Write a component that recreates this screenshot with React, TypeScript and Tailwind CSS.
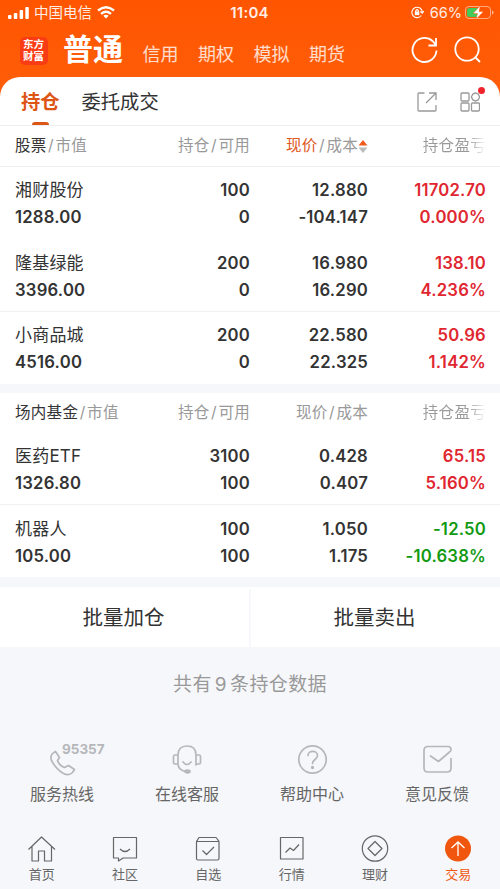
import React from "react";

type Row = {
  name: string;
  value: string;
  held: string;
  usable: string;
  price: string;
  cost: string;
  profit: string;
  rate: string;
  down?: boolean;
};

const stocks: Row[] = [
  { name: "湘财股份", value: "1288.00", held: "100", usable: "0", price: "12.880", cost: "-104.147", profit: "11702.70", rate: "0.000%" },
  { name: "隆基绿能", value: "3396.00", held: "200", usable: "0", price: "16.980", cost: "16.290", profit: "138.10", rate: "4.236%" },
  { name: "小商品城", value: "4516.00", held: "200", usable: "0", price: "22.580", cost: "22.325", profit: "50.96", rate: "1.142%" },
];

const funds: Row[] = [
  { name: "医药ETF", value: "1326.80", held: "3100", usable: "100", price: "0.428", cost: "0.407", profit: "65.15", rate: "5.160%" },
  { name: "机器人", value: "105.00", held: "100", usable: "100", price: "1.050", cost: "1.175", profit: "-12.50", rate: "-10.638%", down: true },
];

const columns = "grid grid-cols-[130px_105px_118px_118px] pl-[15px]";

function HoldingRow({ row, divider }: { row: Row; divider: boolean }) {
  return (
    <div
      className={`${columns} h-[72.400px] items-center border-b pt-[3px] text-[16.700px] leading-[27px] font-semibold tracking-[0.2px] text-[#333] ${
        divider ? "border-[#f0f1f3]" : "border-transparent"
      }`}
    >
      <div>
        <div className="text-[17px] font-normal">{row.name}</div>
        <div>{row.value}</div>
      </div>
      <div className="text-right">
        <div>{row.held}</div>
        <div>{row.usable}</div>
      </div>
      <div className="text-right">
        <div>{row.price}</div>
        <div>{row.cost}</div>
      </div>
      <div className={`text-right ${row.down ? "text-[#129a12]" : "text-[#e0262f]"}`}>
        <div>{row.profit}</div>
        <div>{row.rate}</div>
      </div>
    </div>
  );
}

function TableHead({ title, sorted }: { title: string; sorted?: boolean }) {
  return (
    <div className={`${columns} h-10 items-center text-[15.500px] tracking-[0.3px] whitespace-nowrap text-[#999]`}>
      <div>
        <span className="text-[#333]">{title}</span>
        <span className="px-[1.500px]">/</span>市值
      </div>
      <div className="text-right">
        持仓<span className="px-[1.500px]">/</span>可用
      </div>
      <div className="flex items-center justify-end">
        <span className={sorted ? "text-[#e0591c]" : ""}>现价</span>
        <span className="px-[1.500px]">/</span>成本
        {sorted && (
          <svg className="h-[13px] w-[10px]" viewBox="0 0 10 13">
            <path d="M5 0l4.500 5.500h-9z" fill="#f05a1c" />
            <path d="M5 13L.5 7.500h9z" fill="#bbb" />
          </svg>
        )}
      </div>
      <div className="justify-self-end bg-gradient-to-r from-[#999] from-72% to-white to-100% bg-clip-text text-transparent">
        持仓盈亏
      </div>
    </div>
  );
}

const services = [
  {
    label: "服务热线",
    icon: <path d="M8 8.500c-3 1-3.500 5-2.500 8 3 6 7 10 12 13 4 2 7 1 9-1l2-3-6-4-4 2c-3-1-6-4-7-7l2-3-4-6z" />,
  },
  {
    label: "在线客服",
    icon: (
      <>
        <path d="M7 11C7 5 10 2 16 2s9 3 9 9v10M7 11v10c1 4 4 6 8 6.500M7 11H4q-1.500 0-1.500 1.500v6Q2.500 20 4 20h3M25 11h3q1.500 0 1.500 1.500v6q0 1.500-1.500 1.500h-3M12 18q4 5 8 0" />
        <ellipse cx="16.500" cy="27.500" rx="2.500" ry="1.300" fill="currentColor" />
      </>
    ),
  },
  {
    label: "帮助中心",
    icon: (
      <>
        <circle cx="16.500" cy="15.500" r="13.700" />
        <path d="M12 11.500c0-5.500 9.500-5.500 9.500 0 0 4-5 4-5 8" />
        <circle cx="16.500" cy="23.500" r=".8" fill="currentColor" />
      </>
    ),
  },
  {
    label: "意见反馈",
    icon: <path d="M30 14.500V24q0 4-4 4H7q-4 0-4-4V6.500q0-4 4-4h20q3 0 3 3 0 1.500-1.500 2.500L17.500 17.500l-8-5.500" />,
  },
];

const tabs = [
  { label: "首页", icon: <path d="M.5 14.500L13.500 2l13.500 12.500M4 11.500V26h6.500V16h6v10H23.500V11.500" /> },
  { label: "社区", icon: <path d="M2.500 2.500h23v20.500H12l-4.500 3v-3h-5zM9 14q5 5 10 0" /> },
  { label: "自选", icon: <path d="M2.500 7q0-1 1-2l1.500-2.500h17L24 5q1 1 1 2v16.500q0 1.500-1.500 1.500H4q-1.500 0-1.500-1.500zM2.500 6.500H25M8.500 15.500l4 4 7.500-7.500" /> },
  { label: "行情", icon: <path d="M2.500 2.500h22.500v21.500H2.500zM7.500 17.500l4.500-4.500 3.500 2.500 5.500-6" /> },
  {
    label: "理财",
    icon: (
      <>
        <circle cx="14" cy="13.500" r="12.700" />
        <path d="M14 6.500l7 7-7 7-7-7z" />
      </>
    ),
  },
];

export default function App() {
  return (
    <div className="h-[889px] w-[500px] overflow-hidden bg-[#f6f7fa] font-['Inter','Noto_Sans_CJK_SC',sans-serif]">
      <div className="bg-gradient-to-b from-[#ff5500] to-[#ff600d]">
        <div className="grid h-[25px] grid-cols-3 items-center pr-[6px] pl-2 text-[14px] text-white/90">
          <div className="flex items-center gap-[5px] whitespace-nowrap">
            <svg className="h-[12px] w-[21px]" viewBox="0 0 21 12" fill="white">
              <rect x="0" y="8" width="3.500" height="4" rx="1" />
              <rect x="5.800" y="6" width="3.500" height="6" rx="1" />
              <rect x="11.600" y="3" width="3.500" height="9" rx="1" />
              <rect x="17.300" y="0" width="3.500" height="12" rx="1" />
            </svg>
            <span className="text-[14.500px]">中国电信</span>
            <svg className="h-[13px] w-[18px]" viewBox="0 0 18 13" fill="none" stroke="white" strokeWidth="2.300">
              <path d="M1 4.500q8-6.500 16 0M4 7.800q5-4 10 0" />
              <path d="M9 12.500L6.300 9.700q2.700-2 5.400 0z" fill="white" stroke="none" />
            </svg>
          </div>
          <div className="pt-[1px] pr-[3px] text-center text-[15px] font-semibold tracking-[0.2px]">11:04</div>
          <div className="flex items-center justify-end">
            <svg className="mr-[6px] h-[13px] w-[13px]" viewBox="0 0 13 13" fill="none" stroke="white" strokeWidth="1.100">
              <path d="M10.300 9.500A5.200 5.200 0 1 1 11.300 6M9.300 5.500l2 1.700 1.500-2.200" />
              <rect x="3.800" y="5.500" width="4.500" height="3.600" fill="white" stroke="none" />
              <path d="M4.800 6V4.500q1.200-1.700 2.500 0V6" />
            </svg>
            <span className="mr-[3px] pt-[1px] text-[14.500px]">66%</span>
            <svg className="h-[15px] w-[29px]" viewBox="0 0 29 15">
              <rect x=".5" y="1.500" width="25" height="12" rx="3.500" fill="none" stroke="white" strokeOpacity=".5" />
              <path d="M4.500 3H13v9H4.500Q2 12 2 9.500v-4Q2 3 4.500 3z" fill="#42cb5b" />
              <path d="M27 5.500v4q1.500-.5 1.500-2t-1.500-2z" fill="white" fillOpacity=".6" />
              <path d="M15.500.5L8 8.500h4.500L11 14.500l7.500-8H14z" fill="white" stroke="#ff5a08" strokeWidth=".5" />
            </svg>
          </div>
        </div>
        <div className="flex h-[52px] items-center pr-[18px] pl-[20px]">
          <div className="flex h-[28px] w-[28px] items-center justify-center rounded-[5px] bg-[#fa3c14] text-[10.500px] leading-[12px] font-bold text-white">
            <div className="w-[22px] break-all">东方财富</div>
          </div>
          <div className="-mt-[4px] ml-[15px] text-[30px] leading-none font-bold text-white">普通</div>
          <div className="mt-[7px] ml-[19.500px] flex gap-[19.500px] text-[18px] text-white/80">
            <span>信用</span>
            <span>期权</span>
            <span>模拟</span>
            <span>期货</span>
          </div>
          <div className="-mt-[3px] ml-auto flex gap-[15px]">
            <svg className="h-[28px] w-[28px]" viewBox="0 0 28 28" fill="none" stroke="white" strokeWidth="1.800">
              <path d="M25.500 14.500A12 12 0 1 1 21.500 5L25 9M25 2v7.500h-7.500" />
            </svg>
            <svg className="h-[28px] w-[28px]" viewBox="0 0 28 28" fill="none" stroke="white" strokeWidth="1.800">
              <circle cx="13" cy="13" r="11.700" />
              <path d="M21.500 21.500l4.500 4.500" />
            </svg>
          </div>
        </div>
        <div className="flex h-[49px] items-center rounded-t-[20px] border-b border-[#edeef0] bg-white pr-[20px] pl-[21px] text-[19.300px] text-[#333]">
          <div className="relative pt-[3px] font-bold text-[#dd5515]">
            持仓
            <div className="absolute -bottom-[8px] left-[11px] h-[3px] w-[17px] rounded-t-full bg-[#dd5515]" />
          </div>
          <div className="ml-[22px] pt-[3px]">委托成交</div>
          <svg className="mt-[2px] mr-[23px] ml-auto h-[20px] w-[20px]" viewBox="0 0 20 20" fill="none" stroke="#999" strokeWidth="1.300">
            <path d="M7.500 1H2Q1 1 1 2v16q0 1 1 1h16q1 0 1-1v-5M9 11L18.500 1.500M12 1h7v7" />
          </svg>
          <div className="relative mt-[2px]">
            <svg className="h-[20px] w-[20px]" viewBox="0 0 20 20" fill="none" stroke="#999" strokeWidth="1.300">
              <rect x="1" y="1" width="8" height="8" rx="1" />
              <path d="M15.500 .8l2.800 1.400 1.300 2.800-1.300 2.800-2.800 1.400-2.800-1.400L11.400 5l1.300-2.800z" strokeLinejoin="round" />
              <rect x="1" y="11" width="8" height="8" rx="1" />
              <rect x="11.500" y="11" width="8" height="8" rx="1" />
            </svg>
            <div className="absolute -top-[5px] -right-[5px] h-[7px] w-[7px] rounded-full bg-[#f0222b]" />
          </div>
        </div>
      </div>

      <div className="h-[258px] bg-white">
        <div className="border-b border-[#edeef0]">
          <TableHead title="股票" sorted />
        </div>
        {stocks.map((row, i) => (
          <HoldingRow key={row.name} row={row} divider={i === 1} />
        ))}
      </div>

      <div className="mt-[9px] h-[184px] bg-white">
        <TableHead title="场内基金" />
        {funds.map((row, i) => (
          <HoldingRow key={row.name} row={row} divider={i === 0} />
        ))}
      </div>

      <div className="mt-[10px] flex h-[60px] bg-white pt-[2px] text-[20.500px] text-[#333]">
        <div className="flex flex-1 items-center justify-center border-r-2 border-[#f7f8fb] pr-[2px]">批量加仓</div>
        <div className="flex flex-1 items-center justify-center pr-[2px]">批量卖出</div>
      </div>

      <div className="flex h-[74px] items-center justify-center pt-[2px] text-[19px] tracking-[0.400px] text-[#999]">
        共有<span className="mx-[3px]">9</span>条持仓数据
      </div>

      <div className="grid h-[105px] grid-cols-4 pt-[23px] text-[16px] text-[#666]">
        {services.map((service, i) => (
          <div key={service.label} className="relative flex flex-col items-center pr-[1px]">
            <svg
              className="h-[32px] w-[32px] text-[#b5b7ba]"
              viewBox="0 0 32 32"
              fill="none"
              stroke="currentColor"
              strokeWidth="1.700"
              strokeLinecap="round"
              strokeLinejoin="round"
            >
              {service.icon}
            </svg>
            {i === 0 && (
              <div className="absolute -top-[3px] left-[62px] text-[13.500px] leading-[16px] font-bold text-[#b5b7ba]">95357</div>
            )}
            <div className="mt-[6px]">{service.label}</div>
          </div>
        ))}
      </div>

      <div className="grid h-[63px] grid-cols-6 pt-[9px] text-[13px] leading-[20px] text-[#666]">
        {tabs.map((tab) => (
          <div key={tab.label} className="flex flex-col items-center">
            <svg className="h-[28px] w-[28px]" viewBox="0 0 28 28" fill="none" stroke="currentColor" strokeWidth="1.200" strokeLinejoin="round">
              {tab.icon}
            </svg>
            <span className="pt-[1px]">{tab.label}</span>
          </div>
        ))}
        <div className="flex flex-col items-center text-[#f0560d]">
          <svg className="h-[28px] w-[28px]" viewBox="0 0 28 28" fill="none">
            <circle cx="14" cy="13.500" r="13" fill="currentColor" />
            <path d="M14 21V7M7.500 13l6.500-6 6.500 6" stroke="white" strokeWidth="1.300" />
          </svg>
          <span className="pt-[1px]">交易</span>
        </div>
      </div>
    </div>
  );
}
